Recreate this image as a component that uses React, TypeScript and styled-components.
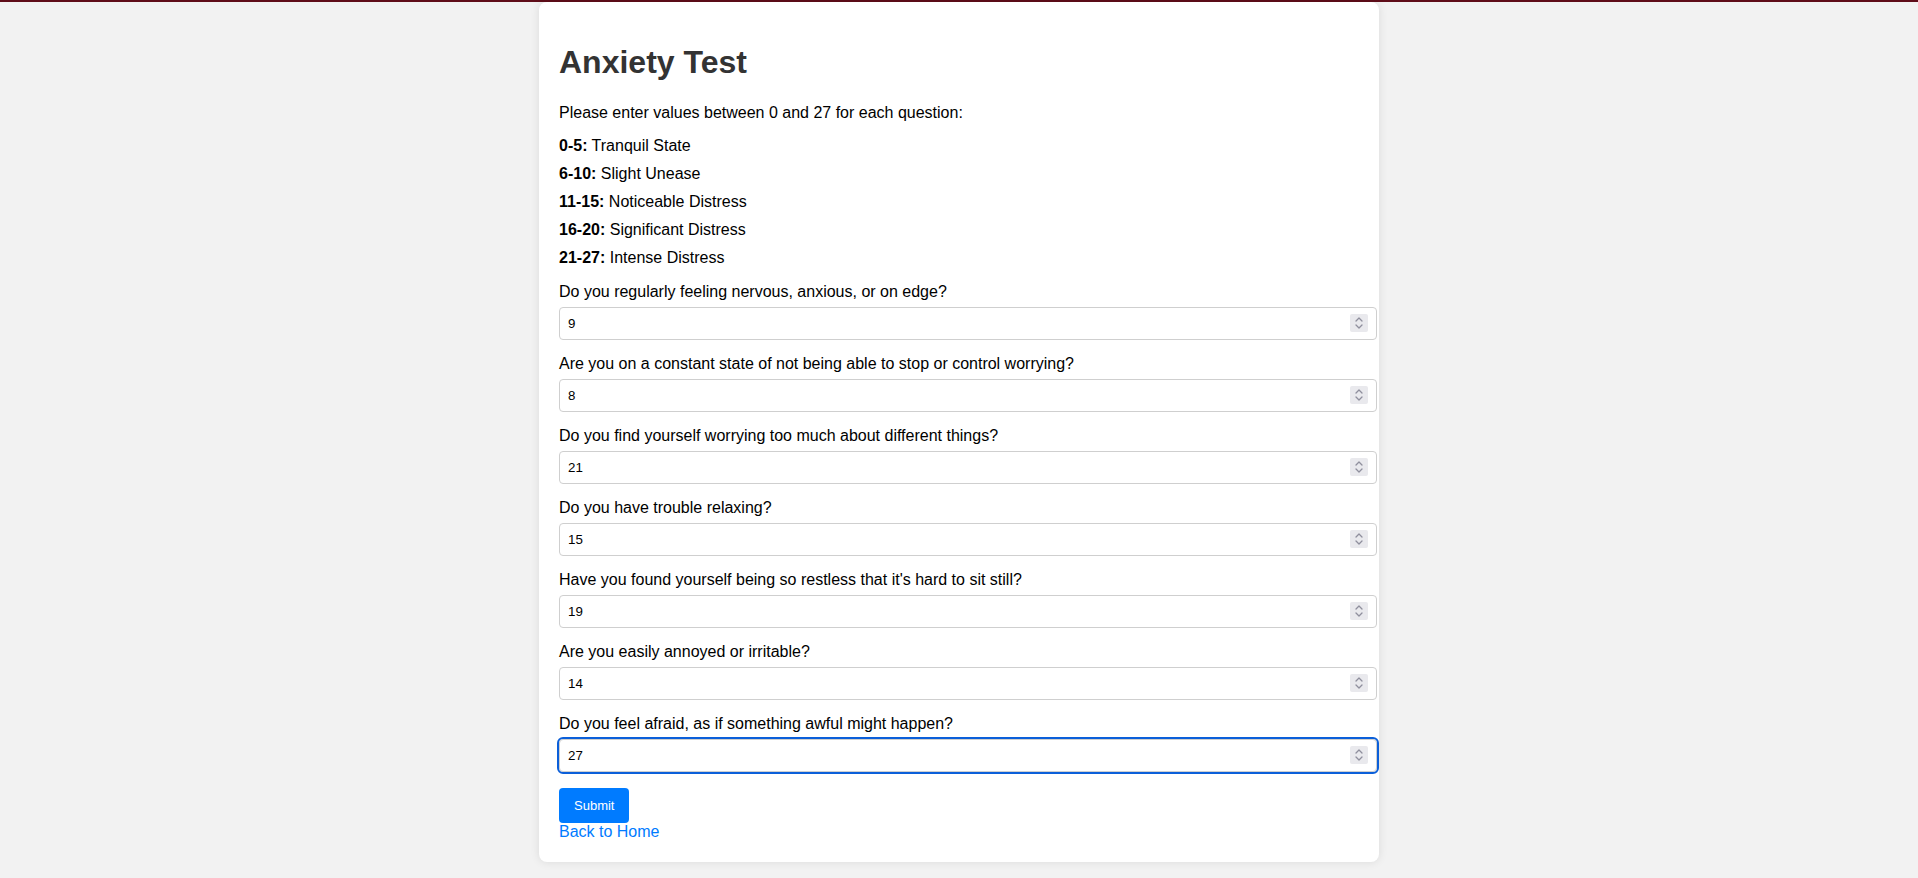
import React from "react";
import styled, { createGlobalStyle } from "styled-components";

const GlobalStyle = createGlobalStyle`
  html, body {
    margin: 0;
    padding: 0;
    background: #f2f2f2;
  }
  body {
    font-family: "Liberation Sans", Arial, sans-serif;
    font-size: 16px;
    color: #000;
  }
  input[type="number"]::-webkit-inner-spin-button,
  input[type="number"]::-webkit-outer-spin-button {
    -webkit-appearance: none;
    margin: 0;
  }
  input[type="number"] {
    -moz-appearance: textfield;
  }
`;

const TopBar = styled.div`
  height: 2px;
  background: #5f0d19;
`;

const Card = styled.main`
  max-width: 800px;
  margin: 0 auto 18px;
  padding: 21px 20px 20px;
  background: #ffffff;
  box-shadow: 0 0 10px rgba(0, 0, 0, 0.1);
  border-radius: 8px;
`;

const Title = styled.h1`
  margin: 21px 0 0;
  font-size: 32px;
  font-weight: bold;
  color: #333333;
  line-height: 37px;
`;

const Intro = styled.p`
  margin: 23px 0 0;
  line-height: 18.4px;
`;

const Ranges = styled.div`
  display: flex;
  flex-direction: column;
  gap: 9.6px;
  margin-top: 15px;
`;

const RangeLine = styled.div`
  line-height: 18.4px;
`;

const Form = styled.form`
  display: flex;
  flex-direction: column;
  align-items: flex-start;
  margin-top: 15.6px;
`;

const Question = styled.div`
  display: block;
  width: 100%;
  margin-bottom: 15.6px;
`;

const Label = styled.label`
  display: block;
  line-height: 18.4px;
  margin-bottom: 5px;
`;

const Field = styled.div`
  position: relative;
  width: 818px;
`;

const NumberInput = styled.input<{ $focused?: boolean }>`
  display: block;
  box-sizing: content-box;
  width: 800px;
  height: 15px;
  padding: 8px;
  margin: 0;
  border: 1px solid #cfcfcf;
  border-radius: 4px;
  background: #ffffff;
  font-family: "Liberation Sans", Arial, sans-serif;
  font-size: 13.33px;
  line-height: 15px;
  color: #000;
  outline: ${(p) => (p.$focused ? "2px solid #0b5fd9" : "none")};
  outline-offset: 0;
  &:focus {
    outline: 2px solid #0b5fd9;
  }
`;

const Spinner = styled.span`
  position: absolute;
  right: 9px;
  top: 50%;
  transform: translateY(-50%);
  width: 18px;
  height: 18px;
  background: #e9e9ed;
  border-radius: 2px;
  display: flex;
  align-items: center;
  justify-content: center;
  pointer-events: none;
`;

const SubmitButton = styled.button`
  margin-top: 0.4px;
  padding: 10px 15px;
  border: none;
  border-radius: 4px;
  background: #007bff;
  color: #ffffff;
  font-family: "Liberation Sans", Arial, sans-serif;
  font-size: 13px;
  line-height: 15.5px;
  cursor: pointer;
`;

const HomeLink = styled.a`
  display: block;
  color: #007bff;
  text-decoration: none;
  line-height: 18.4px;
  font-size: 16px;
`;

const questions: { text: string; value: string }[] = [
  { text: "Do you regularly feeling nervous, anxious, or on edge?", value: "9" },
  { text: "Are you on a constant state of not being able to stop or control worrying?", value: "8" },
  { text: "Do you find yourself worrying too much about different things?", value: "21" },
  { text: "Do you have trouble relaxing?", value: "15" },
  { text: "Have you found yourself being so restless that it's hard to sit still?", value: "19" },
  { text: "Are you easily annoyed or irritable?", value: "14" },
  { text: "Do you feel afraid, as if something awful might happen?", value: "27" },
];

const ranges: [string, string][] = [
  ["0-5:", "Tranquil State"],
  ["6-10:", "Slight Unease"],
  ["11-15:", "Noticeable Distress"],
  ["16-20:", "Significant Distress"],
  ["21-27:", "Intense Distress"],
];

const SpinIcon = () => (
  <svg width="10" height="14" viewBox="0 0 10 14" fill="none">
    <path d="M2 5 L5 2 L8 5" stroke="#8f8f9d" strokeWidth="1.3" strokeLinecap="round" strokeLinejoin="round" />
    <path d="M2 9 L5 12 L8 9" stroke="#8f8f9d" strokeWidth="1.3" strokeLinecap="round" strokeLinejoin="round" />
  </svg>
);

export default function App() {
  const [values, setValues] = React.useState(questions.map((q) => q.value));
  return (
    <>
      <GlobalStyle />
      <TopBar />
      <Card>
        <Title>Anxiety Test</Title>
        <Intro>Please enter values between 0 and 27 for each question:</Intro>
        <Ranges>
          {ranges.map(([r, label]) => (
            <RangeLine key={r}>
              <strong>{r}</strong> {label}
            </RangeLine>
          ))}
        </Ranges>
        <Form onSubmit={(e) => e.preventDefault()}>
          {questions.map((q, i) => (
            <Question key={i}>
              <Label htmlFor={`q${i}`}>{q.text}</Label>
              <Field>
                <NumberInput
                  id={`q${i}`}
                  type="number"
                  min={0}
                  max={27}
                  value={values[i]}
                  $focused={i === questions.length - 1}
                  autoFocus={i === questions.length - 1}
                  onChange={(e) => {
                    const next = [...values];
                    next[i] = e.target.value;
                    setValues(next);
                  }}
                />
                <Spinner>
                  <SpinIcon />
                </Spinner>
              </Field>
            </Question>
          ))}
          <SubmitButton type="submit">Submit</SubmitButton>
          <HomeLink href="#">Back to Home</HomeLink>
        </Form>
      </Card>
    </>
  );
}
